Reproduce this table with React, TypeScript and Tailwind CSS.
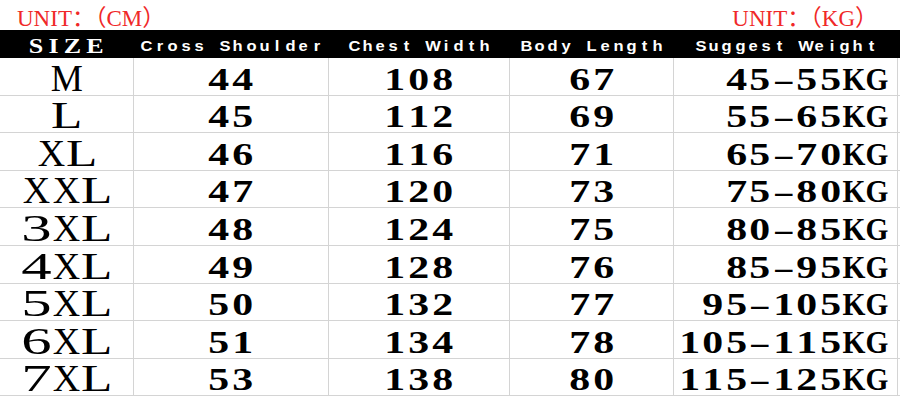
import React from "react";

const rows: string[][] = [
  ["M", "44", "108", "67", "45–55KG"],
  ["L", "45", "112", "69", "55–65KG"],
  ["XL", "46", "116", "71", "65–70KG"],
  ["XXL", "47", "120", "73", "75–80KG"],
  ["3XL", "48", "124", "75", "80–85KG"],
  ["4XL", "49", "128", "76", "85–95KG"],
  ["5XL", "50", "132", "77", "95–105KG"],
  ["6XL", "51", "134", "78", "105–115KG"],
  ["7XL", "53", "138", "80", "115–125KG"],
];

const colW = ["w-[134px]", "w-[195px]", "w-[181px]", "w-[164px]", "w-[224px]"];

function isDigit(c: string) {
  return c >= "0" && c <= "9";
}

function sizeGlyph(c: string) {
  if (c === "L") return "inline-block scale-x-[1.35]";
  if (c === "M") return "inline-block scale-x-[0.95]";
  if (isDigit(c)) return "inline-block scale-x-[1.6]";
  return "inline-block";
}

function numGlyph(c: string) {
  if (isDigit(c)) return "inline-block scale-x-[1.35]";
  return "inline-block";
}

function weightGlyph(c: string) {
  if (isDigit(c)) return "inline-block scale-x-[1.35]";
  if (c === "–") return "inline-block scale-x-[1.1]";
  return "inline-block scale-x-[0.95]";
}

function SizeText({ text }: { text: string }) {
  return (
    <span className="inline-flex -mb-[2px]">
      {text.split("").map((c, i) => (
        <span key={i} className="inline-flex w-[30px] justify-center">
          <span className={sizeGlyph(c)}>{c}</span>
        </span>
      ))}
    </span>
  );
}

function NumText({ text }: { text: string }) {
  return (
    <span className="inline-flex">
      {text.split("").map((c, i) => (
        <span key={i} className="inline-flex w-[24px] justify-center">
          <span className={numGlyph(c)}>{c}</span>
        </span>
      ))}
    </span>
  );
}

function WeightText({ text }: { text: string }) {
  return (
    <span className="inline-flex">
      {text.split("").map((c, i) => (
        <span key={i} className="inline-flex w-[23.5px] justify-center">
          <span className={weightGlyph(c)}>{c}</span>
        </span>
      ))}
    </span>
  );
}

function HeadText({ text }: { text: string }) {
  return (
    <span className="inline-flex pt-[3px]">
      {text.split("").map((c, i) => (
        <span key={i} className="inline-flex w-[13.1px] justify-center">
          <span className="inline-block scale-x-[1.1]">{c === " " ? "\u00a0" : c}</span>
        </span>
      ))}
    </span>
  );
}

export default function App() {
  const serif = "font-['Liberation_Serif','Times_New_Roman','Noto_Sans_CJK_SC',serif]";
  return (
    <div className="w-[900px] h-[416px] bg-white overflow-hidden text-black">
      {/* unit labels */}
      <div className={`flex h-[30px] items-end justify-between pl-[17px] pr-[22px] ${serif}`}>
        <span className="text-[23px] leading-none text-[#f02828]">UNIT：（CM）</span>
        <span className="text-[23px] leading-none text-[#f02828]">UNIT：（KG）</span>
      </div>

      {/* header */}
      <div className="flex h-[28px] w-full bg-black text-white">
        <div className={`${colW[0]} flex items-center justify-center pt-[4px] pl-[4px] ${serif}`}>
          <span className="inline-block scale-x-[1.3] text-[20px] font-bold leading-none tracking-[4px]">SIZE</span>
        </div>
        {["Cross Shoulder", "Chest Width", "Body Length", "Suggest Weight"].map((h, i) => (
          <div
            key={h}
            className={`${colW[i + 1]} flex items-center justify-center font-['Liberation_Sans',Arial,sans-serif] text-[15px] font-bold leading-none`}
          >
            <HeadText text={h} />
          </div>
        ))}
      </div>

      {/* rows */}
      {rows.map((r) => (
        <div key={r[0]} className="flex h-[37.6px] w-full border-b border-[#d4d4d4]">
          <div className={`${colW[0]} flex items-end justify-center border-r border-[#d4d4d4] ${serif} text-[38px] leading-none`}>
            <SizeText text={r[0]} />
          </div>
          <div className={`${colW[1]} flex items-end justify-center border-r border-[#d4d4d4] ${serif} text-[31px] font-bold leading-none`}>
            <NumText text={r[1]} />
          </div>
          <div className={`${colW[2]} flex items-end justify-center border-r border-[#d4d4d4] ${serif} text-[31px] font-bold leading-none`}>
            <NumText text={r[2]} />
          </div>
          <div className={`${colW[3]} flex items-end justify-center border-r border-[#d4d4d4] ${serif} text-[31px] font-bold leading-none`}>
            <NumText text={r[3]} />
          </div>
          <div className={`${colW[4]} flex items-end justify-end pr-[8px] border-r border-[#d4d4d4] ${serif} text-[31px] font-bold leading-none`}>
            <WeightText text={r[4]} />
          </div>
        </div>
      ))}
    </div>
  );
}
